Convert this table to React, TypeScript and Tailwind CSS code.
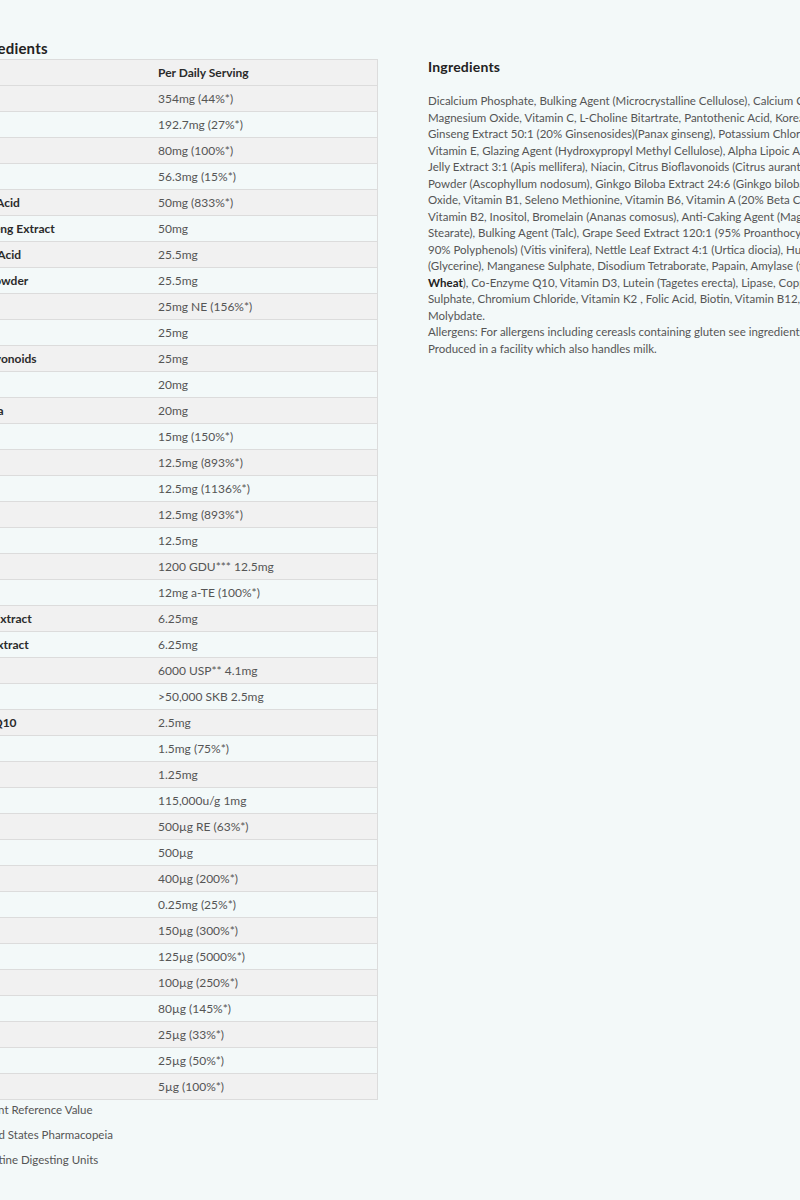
import React from "react";

const rows: [string, string][] = [
  ["Calcium", "354mg (44%*)"],
  ["Magnesium", "192.7mg (27%*)"],
  ["Vitamin C", "80mg (100%*)"],
  ["Potassium", "56.3mg (15%*)"],
  ["Pantothenic Acid", "50mg (833%*)"],
  ["Korean Ginseng Extract", "50mg"],
  ["Alpha Lipoic Acid", "25.5mg"],
  ["Royal Jelly Powder", "25.5mg"],
  ["Niacin", "25mg NE (156%*)"],
  ["Choline", "25mg"],
  ["Citrus Bioflavonoids", "25mg"],
  ["Kelp Powder", "20mg"],
  ["Ginkgo Biloba", "20mg"],
  ["Zinc", "15mg (150%*)"],
  ["Vitamin B6", "12.5mg (893%*)"],
  ["Vitamin B1", "12.5mg (1136%*)"],
  ["Vitamin B2", "12.5mg (893%*)"],
  ["Inositol", "12.5mg"],
  ["Bromelain", "1200 GDU*** 12.5mg"],
  ["Vitamin E", "12mg a-TE (100%*)"],
  ["Grape Seed Extract", "6.25mg"],
  ["Nettle Leaf Extract", "6.25mg"],
  ["Papain", "6000 USP** 4.1mg"],
  ["Amylase", ">50,000 SKB 2.5mg"],
  ["Co-Enzyme Q10", "2.5mg"],
  ["Manganese", "1.5mg (75%*)"],
  ["Boron", "1.25mg"],
  ["Lipase", "115,000u/g 1mg"],
  ["Vitamin A", "500µg RE (63%*)"],
  ["Lutein", "500µg"],
  ["Folic Acid", "400µg (200%*)"],
  ["Copper", "0.25mg (25%*)"],
  ["Biotin", "150µg (300%*)"],
  ["Vitamin B12", "125µg (5000%*)"],
  ["Chromium", "100µg (250%*)"],
  ["Selenium", "80µg (145%*)"],
  ["Vitamin K2", "25µg (33%*)"],
  ["Molybdenum", "25µg (50%*)"],
  ["Vitamin D3", "5µg (100%*)"],
];

const lines: React.ReactNode[] = [
  "Dicalcium Phosphate, Bulking Agent (Microcrystalline Cellulose), Calcium Carbonate,",
  "Magnesium Oxide, Vitamin C, L-Choline Bitartrate, Pantothenic Acid, Korean",
  "Ginseng Extract 50:1 (20% Ginsenosides)(Panax ginseng), Potassium Chloride,",
  "Vitamin E, Glazing Agent (Hydroxypropyl Methyl Cellulose), Alpha Lipoic Acid, Royal",
  "Jelly Extract 3:1 (Apis mellifera), Niacin, Citrus Bioflavonoids (Citrus aurantium), Kelp",
  "Powder (Ascophyllum nodosum), Ginkgo Biloba Extract 24:6 (Ginkgo biloba), Zinc",
  "Oxide, Vitamin B1, Seleno Methionine, Vitamin B6, Vitamin A (20% Beta Carotene),",
  "Vitamin B2, Inositol, Bromelain (Ananas comosus), Anti-Caking Agent (Magnesium",
  "Stearate), Bulking Agent (Talc), Grape Seed Extract 120:1 (95% Proanthocyanidins,",
  "90% Polyphenols) (Vitis vinifera), Nettle Leaf Extract 4:1 (Urtica diocia), Humectant",
  "(Glycerine), Manganese Sulphate, Disodium Tetraborate, Papain, Amylase (from",
  <>
    <b className="font-bold text-[#222]">Wheat</b>), Co-Enzyme Q10, Vitamin D3, Lutein (Tagetes erecta), Lipase, Copper
  </>,
  "Sulphate, Chromium Chloride, Vitamin K2 , Folic Acid, Biotin, Vitamin B12, Sodium",
  "Molybdate.",
  "Allergens: For allergens including cereasls containing gluten see ingredients in bold.",
  "Produced in a facility which also handles milk.",
];

export default function App() {
  return (
    <div
      className="w-[800px] h-[1200px] overflow-hidden bg-[#f3f9f9] text-[#555]"
      style={{ fontFamily: "Lato, 'Noto Sans', sans-serif" }}
    >
      <div className="flex ml-[-84px] pt-[38px]">
        <div className="w-[462px] shrink-0">
          <h2 className="pl-[7px] text-[15px] leading-[20px] font-bold text-[#222] tracking-[0.2px]">
            Active Ingredients
          </h2>
          <div className="mt-px border-t border-x border-[#dcdcdc] text-[12px]">
            <div className="flex h-[26px] items-center border-b border-[#dcdcdc] bg-[#f1f1f1] font-bold text-[#2b2b2b]">
              <div className="w-[229px] px-[12px]">Ingredient</div>
              <div className="flex-1 px-[12px]">Per Daily Serving</div>
            </div>
            {rows.map(([label, value], i) => (
              <div
                key={i}
                className={
                  "flex h-[26px] items-center border-b border-[#dcdcdc] " +
                  (i % 2 === 0 ? "bg-[#f1f1f1]" : "bg-transparent")
                }
              >
                <div className="w-[229px] px-[12px] font-bold text-[#2b2b2b] whitespace-nowrap">
                  {label}
                </div>
                <div className="flex-1 px-[12px] text-[#555] whitespace-nowrap">{value}</div>
              </div>
            ))}
          </div>
          <div className="mt-[-3px] pl-[45px] text-[11.5px] text-[#555]">
            <p className="leading-[25px]">*Nutrient Reference Value</p>
            <p className="leading-[25px]">**United States Pharmacopeia</p>
            <p className="leading-[25px]">***Gelatine Digesting Units</p>
          </div>
        </div>
        <div className="ml-[50px] w-[480px] shrink-0">
          <h2 className="mt-[19px] text-[14px] leading-[20px] font-bold text-[#222] tracking-[0.2px]">
            Ingredients
          </h2>
          <div className="mt-[16px] text-[11.5px] leading-[16.5px] text-[#555]">
            {lines.map((l, i) => (
              <span key={i} className="block whitespace-nowrap">
                {l}
              </span>
            ))}
          </div>
        </div>
      </div>
    </div>
  );
}
